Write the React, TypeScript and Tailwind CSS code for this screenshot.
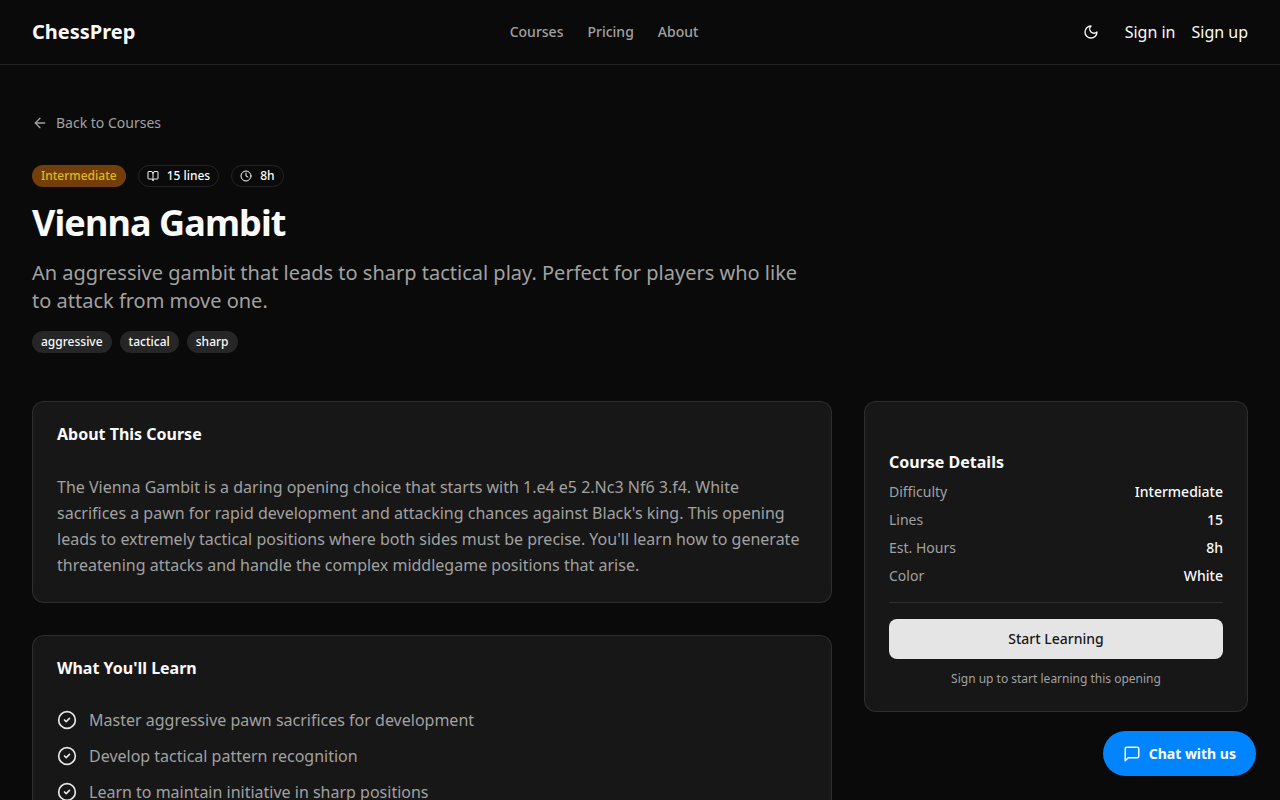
import { type ReactNode } from "react";
import { ArrowLeft, BookOpen, CircleCheck, Clock } from "lucide-react";
import { clsx } from "clsx";

const NAV_LINKS = ["Courses", "Pricing", "About"];
const TAGS = ["aggressive", "tactical", "sharp"];

const OUTCOMES = [
  "Master aggressive pawn sacrifices for development",
  "Develop tactical pattern recognition",
  "Learn to maintain initiative in sharp positions",
];

const DETAILS = [
  { label: "Difficulty", value: "Intermediate" },
  { label: "Lines", value: "15" },
  { label: "Est. Hours", value: "8h" },
  { label: "Color", value: "White" },
];

function Badge({ children, className }: { children: ReactNode; className?: string }) {
  return (
    <span
      className={clsx(
        "inline-flex items-center gap-2 rounded-full border px-2 py-0.5 text-xs font-medium",
        className,
      )}
    >
      {children}
    </span>
  );
}

function Card({ title, children }: { title: string; children: ReactNode }) {
  return (
    <section className="rounded-xl border border-white/10 bg-neutral-900 p-6">
      <h2 className="mb-8 leading-4 font-bold">{title}</h2>
      {children}
    </section>
  );
}

function MoonIcon() {
  return (
    <svg
      viewBox="0 0 24 24"
      className="size-4"
      fill="none"
      stroke="currentColor"
      strokeWidth="2"
      strokeLinecap="round"
      strokeLinejoin="round"
      aria-hidden="true"
    >
      <path d="M12 3a6 6 0 0 0 9 9 9 9 0 1 1-9-9Z" />
    </svg>
  );
}

function ChatIcon() {
  return (
    <svg
      viewBox="0 0 24 24"
      className="size-[18px]"
      fill="none"
      stroke="currentColor"
      strokeWidth="2"
      strokeLinecap="round"
      strokeLinejoin="round"
      aria-hidden="true"
    >
      <path d="M21 15a2 2 0 0 1-2 2H7l-4 4V5a2 2 0 0 1 2-2h14a2 2 0 0 1 2 2z" />
    </svg>
  );
}

function Header() {
  return (
    <header className="border-b border-white/10">
      <div className="flex h-16 items-center justify-between px-8">
        <a href="#" className="text-xl font-bold">
          ChessPrep
        </a>
        <nav className="flex items-center gap-6 text-sm font-medium text-neutral-400">
          {NAV_LINKS.map((link) => (
            <a key={link} href="#" className="hover:text-neutral-50">
              {link}
            </a>
          ))}
        </nav>
        <div className="flex items-center gap-4">
          <button
            type="button"
            aria-label="Toggle theme"
            className="flex size-9 items-center justify-center rounded-md hover:bg-neutral-800"
          >
            <MoonIcon />
          </button>
          <button type="button">Sign in</button>
          <button type="button">Sign up</button>
        </div>
      </div>
    </header>
  );
}

function CourseDetails() {
  return (
    <aside className="rounded-xl border border-white/10 bg-neutral-900 px-6 pt-12 pb-6">
      <h3 className="mb-2 font-bold">Course Details</h3>
      <dl className="flex flex-col gap-2 text-sm">
        {DETAILS.map(({ label, value }) => (
          <div key={label} className="flex justify-between">
            <dt className="text-neutral-400">{label}</dt>
            <dd className="font-medium">{value}</dd>
          </div>
        ))}
      </dl>
      <hr className="my-4 border-white/10" />
      <button
        type="button"
        className="h-10 w-full rounded-lg bg-neutral-200 text-sm font-medium text-neutral-900 hover:bg-neutral-300"
      >
        Start Learning
      </button>
      <p className="mt-3 text-center text-xs text-neutral-400">
        Sign up to start learning this opening
      </p>
    </aside>
  );
}

export default function App() {
  return (
    <div className="min-h-screen bg-neutral-950 font-['Noto_Sans',sans-serif] text-neutral-50">
      <Header />

      <main className="px-8 py-12">
        <a
          href="#"
          className="mb-8 flex w-fit items-center gap-2 text-sm text-neutral-400 hover:text-neutral-50"
        >
          <ArrowLeft size={16} />
          Back to Courses
        </a>

        {/* Course heading */}
        <div className="mb-12 max-w-3xl">
          <div className="mb-4 flex flex-wrap items-center gap-3">
            <Badge className="border-transparent bg-yellow-900 text-[#e0b91a]">Intermediate</Badge>
            <Badge className="border-white/10">
              <BookOpen size={12} />
              15 lines
            </Badge>
            <Badge className="border-white/10">
              <Clock size={12} />
              8h
            </Badge>
          </div>
          <h1 className="mb-4 text-4xl font-bold tracking-tight">Vienna Gambit</h1>
          <p className="mb-4 text-xl text-neutral-400">
            An aggressive gambit that leads to sharp tactical play. Perfect for players who like to
            attack from move one.
          </p>
          <div className="flex flex-wrap gap-2">
            {TAGS.map((tag) => (
              <Badge key={tag} className="border-transparent bg-neutral-800">
                {tag}
              </Badge>
            ))}
          </div>
        </div>

        <div className="grid items-start gap-8 lg:grid-cols-3">
          <div className="flex flex-col gap-8 lg:col-span-2">
            <Card title="About This Course">
              <p className="leading-[26px] text-neutral-400">
                The Vienna Gambit is a daring opening choice that starts with 1.e4 e5 2.Nc3 Nf6
                3.f4. White sacrifices a pawn for rapid development and attacking chances against
                Black's king. This opening leads to extremely tactical positions where both sides
                must be precise. You'll learn how to generate threatening attacks and handle the
                complex middlegame positions that arise.
              </p>
            </Card>

            <Card title="What You'll Learn">
              <ul className="flex flex-col gap-3">
                {OUTCOMES.map((outcome) => (
                  <li key={outcome} className="flex items-start gap-3">
                    <CircleCheck size={20} className="mt-0.5 shrink-0 text-neutral-200" />
                    <span className="text-neutral-400">{outcome}</span>
                  </li>
                ))}
              </ul>
            </Card>
          </div>

          <CourseDetails />
        </div>
      </main>

      <button
        type="button"
        className="fixed right-6 bottom-6 flex items-center gap-2 rounded-full bg-[#0084ff] px-5 py-3 text-sm leading-[21px] font-bold text-white"
      >
        <ChatIcon />
        Chat with us
      </button>
    </div>
  );
}
